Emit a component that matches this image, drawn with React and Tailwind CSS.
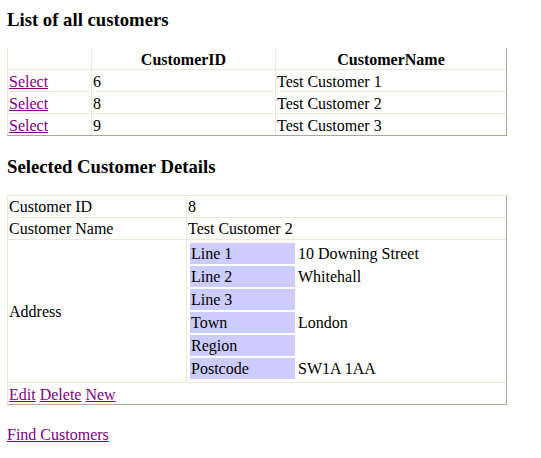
import React from "react";

const L = "border-[#ECE9D8]";

function A({ children }) {
  return (
    <a href="#" className="text-[#800080] underline" onClick={(e) => e.preventDefault()}>
      {children}
    </a>
  );
}

export default function App() {
  const customers = [
    ["6", "Test Customer 1"],
    ["8", "Test Customer 2"],
    ["9", "Test Customer 3"],
  ];
  const addr = [
    ["Line 1", "10 Downing Street"],
    ["Line 2", "Whitehall"],
    ["Line 3", ""],
    ["Town", "London"],
    ["Region", ""],
    ["Postcode", "SW1A 1AA"],
  ];
  return (
    <div
      className="bg-white text-black text-[16px] pl-[7px] pt-[9px] min-h-[458px]"
      style={{ fontFamily: '"Liberation Serif", "Times New Roman", serif' }}
    >
      <h3 className="text-[18.72px] font-bold leading-[22px] mb-[17px]">List of all customers</h3>
      <table className="border-separate border-spacing-0 table-fixed w-[500px] border-r border-b border-[#ACA899] leading-[19px]">
        <colgroup>
          <col className="w-[84px]" />
          <col className="w-[184px]" />
          <col className="w-[231px]" />
        </colgroup>
        <thead>
          <tr>
            <th className={`border-l ${L} px-[1px] pt-[2px] pb-0`}></th>
            <th className={`border-l ${L} px-[1px] pt-[2px] pb-0 font-bold text-center`}>CustomerID</th>
            <th className={`border-l ${L} px-[1px] pt-[2px] pb-0 font-bold text-center`}>CustomerName</th>
          </tr>
        </thead>
        <tbody>
          {customers.map(([id, name]) => (
            <tr key={id}>
              <td className={`border-l border-t ${L} px-[1px] pt-[2px] pb-0`}>
                <A>Select</A>
              </td>
              <td className={`border-l border-t ${L} px-[1px] pt-[2px] pb-0`}>{id}</td>
              <td className={`border-l border-t ${L} px-[1px] pt-[2px] pb-0`}>{name}</td>
            </tr>
          ))}
        </tbody>
      </table>

      <h3 className="text-[18.72px] font-bold leading-[22px] mt-[20px] mb-[17px]">Selected Customer Details</h3>
      <table className={`border-separate border-spacing-0 table-fixed w-[500px] border-r border-b border-t border-t-[#ECE9D8] border-[#ACA899] leading-[21px]`}>
        <colgroup>
          <col className="w-[179px]" />
          <col className="w-[320px]" />
        </colgroup>
        <tbody>
          <tr>
            <td className={`border-l ${L} px-[1px] p-0`}>Customer ID</td>
            <td className={`border-l ${L} px-[1px] p-0`}>8</td>
          </tr>
          <tr>
            <td className={`border-l border-t ${L} px-[1px] p-0`}>Customer Name</td>
            <td className={`border-l border-t ${L} px-[1px] p-0`}>Test Customer 2</td>
          </tr>
          <tr>
            <td className={`border-l border-t ${L} px-[1px] p-0 align-middle`}>Address</td>
            <td className={`border-l border-t ${L} p-[1px]`}>
              <table className="border-separate border-spacing-[2px] leading-[19px]">
                <tbody>
                  {addr.map(([k, v]) => (
                    <tr key={k}>
                      <td className="bg-[#CCCCFF] w-[105px] p-[1px]">{k}</td>
                      <td className="p-[1px]">{v}</td>
                    </tr>
                  ))}
                </tbody>
              </table>
            </td>
          </tr>
          <tr>
            <td colSpan={2} className={`border-l border-t ${L} px-[1px] pt-[2px] pb-0 leading-[19px]`}>
              <A>Edit</A> <A>Delete</A> <A>New</A>
            </td>
          </tr>
        </tbody>
      </table>

      <div className="mt-[19px] leading-[21px]">
        <A>Find Customers</A>
      </div>
    </div>
  );
}
